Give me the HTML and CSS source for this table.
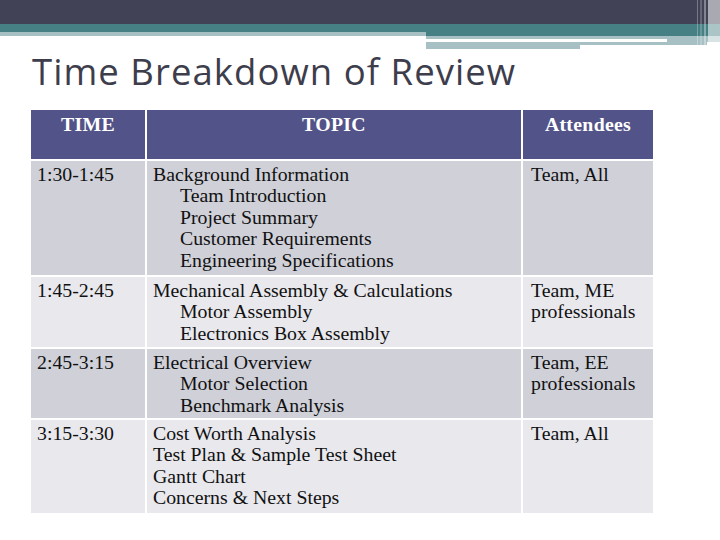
FILE: index.html
```html
<!DOCTYPE html>
<html>
<head>
<meta charset="utf-8">
<link rel="stylesheet" href="styles.css">
</head>
<body>
<div class="banner">
<svg width="720" height="49" viewBox="0 0 720 49" xmlns="http://www.w3.org/2000/svg">
<rect x="0" y="0" width="720" height="24" fill="#414256"/>
<rect x="0" y="24" width="720" height="8" fill="#467f84"/>
<rect x="0" y="32" width="426" height="4" fill="#a7c0c3"/>
<rect x="426" y="32" width="294" height="4" fill="#467f84"/>
<rect x="426" y="36" width="294" height="3" fill="#a7c0c3"/>
<rect x="426" y="39" width="241" height="3" fill="#ffffff"/>
<rect x="667" y="39" width="53" height="3" fill="#a7c0c3"/>
<rect x="426" y="42" width="281" height="3" fill="#a7c0c3"/>
<rect x="426" y="45" width="154" height="4" fill="#a7c0c3"/>
<rect x="697" y="0" width="1" height="46" fill="#ffffff" opacity="0.3"/>
<rect x="700" y="0" width="2" height="46" fill="#ffffff" opacity="0.2"/>
<rect x="704" y="0" width="2" height="46" fill="#ffffff" opacity="0.35"/>
<rect x="708" y="0" width="12" height="46" fill="#ffffff" opacity="0.55"/>
</svg>
</div>
<h1 class="title">Time Breakdown of Review</h1>
<div class="grid">
  <div class="cell head">TIME</div>
  <div class="cell head">TOPIC</div>
  <div class="cell head">Attendees</div>

  <div class="cell dark c1">1:30-1:45</div>
  <div class="cell dark c2">Background Information<div class="sub">Team Introduction</div><div class="sub">Project Summary</div><div class="sub">Customer Requirements</div><div class="sub">Engineering Specifications</div></div>
  <div class="cell dark c3">Team, All</div>

  <div class="cell light c1">1:45-2:45</div>
  <div class="cell light c2">Mechanical Assembly &amp; Calculations<div class="sub">Motor Assembly</div><div class="sub">Electronics Box Assembly</div></div>
  <div class="cell light c3">Team, ME professionals</div>

  <div class="cell dark c1">2:45-3:15</div>
  <div class="cell dark c2">Electrical Overview<div class="sub">Motor Selection</div><div class="sub">Benchmark Analysis</div></div>
  <div class="cell dark c3">Team, EE professionals</div>

  <div class="cell light c1">3:15-3:30</div>
  <div class="cell light c2">Cost Worth Analysis<br>Test Plan &amp; Sample Test Sheet<br>Gantt Chart<br>Concerns &amp; Next Steps</div>
  <div class="cell light c3">Team, All</div>
</div>
</body>
</html>
```
FILE: styles.css
```css
html, body {
  margin: 0;
  padding: 0;
  background: #ffffff;
}
.banner {
  height: 49px;
}
.banner svg {
  display: block;
}
.title {
  margin: 2px 0 0 32px;
  font-family: "Open Sans", "DejaVu Sans", sans-serif;
  font-weight: 400;
  font-size: 36.5px;
  line-height: 40px;
  letter-spacing: 1.05px;
  color: #3d3d4c;
}
.grid {
  margin: 19px 0 0 31px;
  display: grid;
  grid-template-columns: 114px 374px 130px;
  grid-template-rows: 49px 114px 70px 69px 93px;
  gap: 2px;
  width: 622px;
  font-family: "Liberation Serif", "Times New Roman", serif;
  font-size: 19.8px;
  line-height: 21.4px;
  color: #111111;
}
.cell {
  padding: 3px 6px 0 6px;
}
.head {
  background: #525388;
  color: #ffffff;
  font-weight: bold;
  text-align: center;
  padding-top: 4px;
  letter-spacing: 0.3px;
}
.dark {
  background: #cfd0d8;
}
.light {
  background: #e8e8ed;
}
.c3 {
  padding-left: 8px;
}
.sub {
  padding-left: 27px;
}
```
